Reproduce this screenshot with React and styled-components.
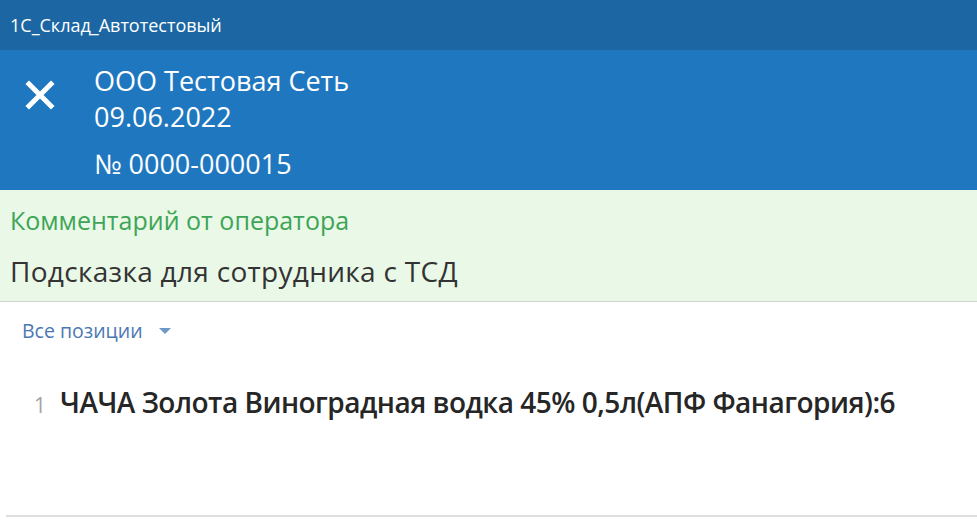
import React from "react"
import styled, { createGlobalStyle } from "styled-components"

const Global = createGlobalStyle`
  html, body {
    margin: 0;
    padding: 0;
    background: #fff;
    font-family: "Open Sans", "Noto Sans", sans-serif;
  }
`

const Page = styled.div`
  width: 977px;
  height: 526px;
  display: flex;
  flex-direction: column;
  overflow: hidden;
`

const TitleBar = styled.div`
  height: 50px;
  flex-shrink: 0;
  background: #1c67a3;
  color: #fff;
  font-size: 18px;
  display: flex;
  align-items: center;
  padding-left: 10px;
  box-sizing: border-box;
`

const Header = styled.div`
  height: 140px;
  flex-shrink: 0;
  background: #1f78bf;
  color: #fff;
  display: flex;
  align-items: flex-start;
`

const CloseButton = styled.div`
  width: 94px;
  padding: 30px 15px 0 0;
  display: flex;
  justify-content: center;
  box-sizing: border-box;
`

const HeaderText = styled.div`
  display: flex;
  flex-direction: column;
  padding-top: 13px;
`

const HeaderLine = styled.div`
  font-size: 27px;
  line-height: 36px;
  margin-top: ${p => p.$gap || 0}px;
`

const Comment = styled.div`
  height: 112px;
  flex-shrink: 0;
  background: #e9f8e7;
  border-bottom: 1px solid #cfd4cf;
  box-sizing: border-box;
  padding: 14px 10px 0;
`

const CommentTitle = styled.div`
  color: #3ea556;
  font-size: 25px;
  line-height: 32px;
`

const CommentText = styled.div`
  color: #333;
  font-size: 28px;
  line-height: 36px;
  letter-spacing: 0.3px;
  margin-top: 17px;
`

const Filter = styled.div`
  display: flex;
  align-items: center;
  gap: 16px;
  padding: 17px 0 0 22px;
  color: #4b78b3;
  font-size: 19.5px;
  line-height: 24px;
`

const Caret = styled.span`
  width: 0;
  height: 0;
  border-left: 6px solid transparent;
  border-right: 6px solid transparent;
  border-top: 6px solid #6f97c8;
`

const Item = styled.div`
  display: flex;
  align-items: baseline;
  padding: 40px 0 0 34px;
  gap: 14px;
`

const ItemNum = styled.span`
  color: #a3a3a3;
  font-size: 21px;
`

const ItemName = styled.span`
  color: #262626;
  font-size: 28px;
  font-weight: 600;
  letter-spacing: -0.5px;
`

const Spacer = styled.div`
  flex: 1;
`

const BottomLine = styled.div`
  margin: 0 0 9px 6px;
  height: 2px;
  background: #dedede;
`

const CloseIcon = () => (
  <svg width="30" height="30" viewBox="0 0 30 30">
    <path d="M4 4 L26 26 M26 4 L4 26" stroke="#fff" strokeWidth="5" strokeLinecap="square" />
  </svg>
)

export default function App() {
  return (
    <Page>
      <Global />
      <TitleBar>1С_Склад_Автотестовый</TitleBar>
      <Header>
        <CloseButton><CloseIcon /></CloseButton>
        <HeaderText>
          <HeaderLine>ООО Тестовая Сеть</HeaderLine>
          <HeaderLine>09.06.2022</HeaderLine>
          <HeaderLine $gap={11}>№ 0000-000015</HeaderLine>
        </HeaderText>
      </Header>
      <Comment>
        <CommentTitle>Комментарий от оператора</CommentTitle>
        <CommentText>Подсказка для сотрудника с ТСД</CommentText>
      </Comment>
      <Filter>
        Все позиции
        <Caret />
      </Filter>
      <Item>
        <ItemNum>1</ItemNum>
        <ItemName>ЧАЧА Золота Виноградная водка 45% 0,5л(АПФ Фанагория):6</ItemName>
      </Item>
      <Spacer />
      <BottomLine />
    </Page>
  )
}
